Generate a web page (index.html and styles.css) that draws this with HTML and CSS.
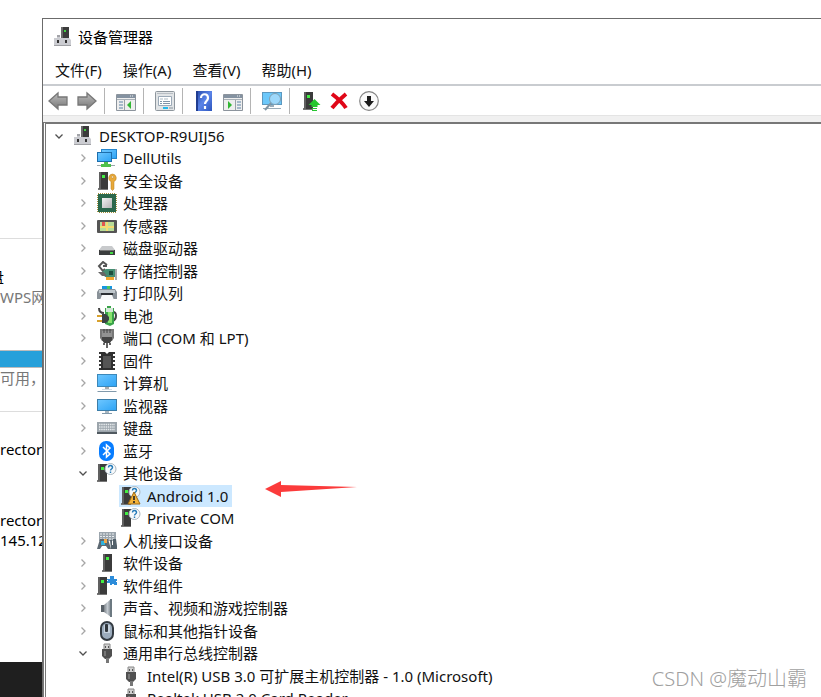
FILE: index.html
```
<!DOCTYPE html>
<html lang="zh-CN">
<head>
<meta charset="utf-8">
<meta name="viewport" content="width=device-width, initial-scale=1">
<title>设备管理器</title>
<link rel="stylesheet" href="styles.css">
</head>
<body>
<svg class="sprite" aria-hidden="true">
  <defs>
    <linearGradient id="g-screen" x1="0" y1="0" x2="1" y2="1"><stop offset="0" stop-color="#6cc6ff"/><stop offset="1" stop-color="#2fa4f5"/></linearGradient>
    <linearGradient id="g-arrow" x1="0" y1="0" x2="0" y2="1"><stop offset="0" stop-color="#bdbdbd"/><stop offset="1" stop-color="#777"/></linearGradient>
    <linearGradient id="g-metal" x1="0" y1="0" x2="1" y2="0"><stop offset="0" stop-color="#7c8288"/><stop offset=".5" stop-color="#c3cad0"/><stop offset="1" stop-color="#7d858c"/></linearGradient>
    <linearGradient id="g-help" x1="0" y1="0" x2="1" y2="1"><stop offset="0" stop-color="#2448a8"/><stop offset=".5" stop-color="#5b84e8"/><stop offset="1" stop-color="#2c55bd"/></linearGradient>
    <linearGradient id="g-chip" x1="0" y1="0" x2="1" y2="1"><stop offset="0" stop-color="#f3f3f3"/><stop offset="1" stop-color="#b4b4b4"/></linearGradient>
  </defs>
  <symbol id="down" viewBox="0 0 10 10"><path d="M1.500 3.500 5 7l3.500-3.500" fill="none" stroke="#505050" stroke-width="1.300"/></symbol>
  <symbol id="right" viewBox="0 0 10 10"><path d="M3.500 1.500 7 5 3.500 8.500" fill="none" stroke="#a6a6a6" stroke-width="1.300"/></symbol>

  <symbol id="tower" viewBox="0 0 20 20"><path d="M5 17h10v2H5z" fill="#777"/><path d="M6 1h9v17H6z" fill="#3b3b3b"/><path d="M6 1h2v17H6z" fill="#606060"/><path d="M9 4h3v3H9z" fill="#42ee43"/></symbol>
  <symbol id="towerleft" viewBox="0 0 20 20"><path d="M0 17h10v2H0z" fill="#777"/><path d="M1 1h9v17H1z" fill="#3b3b3b"/><path d="M1 1h2v17H1z" fill="#606060"/><path d="M4 4h3v3H4z" fill="#42ee43"/></symbol>
  <symbol id="root" viewBox="0 0 20 20"><path d="M8 0h8v11H8z" fill="#3b3b3b"/><path d="M8 0h2v11H8z" fill="#6a6a6a"/><path d="M11 3h2v2h-2z" fill="#42d243"/><path d="M4 8h3v3h9l2 2v6H1v-8h3z" fill="#cbccd1"/><path d="M4 8h3v2H4z" fill="#a2a3a8"/><path d="M1 18h17v1H1z" fill="#a0a1a5"/><path d="M4 13h2v3H4zM12 13h2v3h-2z" fill="#333"/></symbol>
  <symbol id="network" viewBox="0 0 20 20"><path d="M4 1h16v10H4z" fill="#2385cd"/><path d="M5 2h14v8H5z" fill="url(#g-screen)"/><path d="M0 4h15v10H0z" fill="#1d6eac"/><path d="M1 5h13v8H1z" fill="url(#g-screen)"/><path d="M7 14h4v2h3v3H4v-3h3z" fill="#4fc04c"/><path d="M0 17h4v1H0zM14 17h4v1h-4z" fill="#9ba7ad"/></symbol>
  <symbol id="security" viewBox="0 0 20 20"><use href="#towerleft" x="1" width="20" height="20"/><path fill-rule="evenodd" d="M15.500 3a4 4 0 0 1 1.500 7.600V18l-1.500 1.500L14 18v-7.400A4 4 0 0 1 15.500 3zm0 2a1 1 0 1 0 0 2 1 1 0 0 0 0-2z" fill="#e8a93a" stroke="#b67c1d" stroke-width=".5"/></symbol>
  <symbol id="cpu" viewBox="0 0 20 20"><path d="M1 1h18v18H1z" fill="none" stroke="#a58f3b" stroke-width="2" stroke-dasharray="1 1"/><path d="M1 1h18v18H1z" fill="#2b684c"/><path d="M5 5h10v10H5z" fill="url(#g-chip)"/></symbol>
  <symbol id="sensor" viewBox="0 0 20 20"><rect x="0" y="4" width="20" height="13" rx="1" fill="#555"/><path d="M3 6h14v9H3z" fill="#b8dc98"/><path d="M3 11h14M10 6v9" stroke="#f4dc71" stroke-width="2"/><path d="M5 6h3v4H5z" fill="#e3564e"/></symbol>
  <symbol id="disk" viewBox="0 0 20 20"><path d="M5 8h10l3 4H2z" fill="#c8cacc"/><path d="M2 12h16v5H2z" fill="#3b3d3e"/><path d="M3 12h14v1H3z" fill="#777"/><path d="M13 14h3v2h-3z" fill="#43d945"/></symbol>
  <symbol id="storage" viewBox="0 0 20 20"><path d="M10 4 6 1 2 5l4 5 2-2M6 5h4" fill="none" stroke="#555" stroke-width="2"/><path d="M5 11l4-3h10v8H8z" fill="#458e72"/><path d="M1 11h6l3 4H5z" fill="#666"/><path d="M12 10h4v4h-4z" fill="#1d4e3c"/><path d="M9 16h8v3H9z" fill="#f1a52d"/><path d="M19 8v11" stroke="#aaa" stroke-width="2"/></symbol>
  <symbol id="printer" viewBox="0 0 20 20"><path d="M5 3h10v4H5z" fill="#1696df"/><path d="M10 3h3v4h-3z" fill="#49c75e"/><path d="M2 6h16l2 3v7H0V9z" fill="#8a9299"/><path d="M2 7h16v3H2z" fill="#c0c8cd"/><path d="M4 10h12v2H4z" fill="#2b3034"/><path d="m5 12-2 5h14l-2-5z" fill="#f8fafb"/></symbol>
  <symbol id="battery" viewBox="0 0 20 20"><path d="M2 2c0 4 2 5 5 5" fill="none" stroke="#444" stroke-width="2"/><path d="M16 6c4 0 4 7 0 9" fill="none" stroke="#444" stroke-width="2"/><path d="M10 0h4v2h3v16l-4 2-5-2V2h2z" fill="#3aa34a"/><path d="M9 2h7v4H9z" fill="#d5e6d8"/><path d="M11 6h4v11h-4z" fill="#87e16c"/><path d="M0 10h6M0 15h6" stroke="#d8a12d" stroke-width="2"/><path d="M5 8h4l3 3v3l-3 3H5z" fill="#3d4144"/></symbol>
  <symbol id="port" viewBox="0 0 20 20"><path d="M3 1h14v9l-2 3H5l-2-3z" fill="#777"/><path d="M5 3h10v7H5z" fill="#929292"/><path d="M7 1v4M10 1v4M13 1v4" stroke="#444" stroke-width="1"/><path d="M5 9h10v3l-2 3H7l-2-3z" fill="#444"/><path d="M7 15v2M10 15v5M13 15v2" stroke="#666" stroke-width="2"/></symbol>
  <symbol id="firmware" viewBox="0 0 20 20"><path d="M2 2h3M2 6h3M2 10h3M2 14h3M2 18h3M15 2h3M15 6h3M15 10h3M15 14h3M15 18h3" stroke="#333" stroke-width="2"/><path d="M4 1h4l2 2 2-2h4v18H4z" fill="#303030"/><path d="M6 5h8v12H6z" fill="#555"/></symbol>
  <symbol id="computer" viewBox="0 0 20 20"><path d="M0 1h20v13H0z" fill="#3c88b9"/><path d="M1 2h18v11H1z" fill="url(#g-screen)"/><path d="M8 14h4v2H8z" fill="#aaa"/><path d="M5 16h10v1H5z" fill="#d1dce3"/><path d="M1 18h18l1 1H0z" fill="#8199ab"/></symbol>
  <symbol id="monitor" viewBox="0 0 20 20"><path d="M0 3h20v12H0z" fill="#3c7da8"/><path d="M1 4h18v10H1z" fill="url(#g-screen)"/><path d="M8 15h4v2H8z" fill="#aab7c0"/><path d="M5 17h10v1H5z" fill="#8199ab"/></symbol>
  <symbol id="keyboard" viewBox="0 0 20 20"><path d="M0 4h20v12H0z" fill="#9ca5ac"/><path d="M2 6.500h16M2 9h16M2 11.500h16" stroke="#e5e9eb" stroke-width="1.400" stroke-dasharray="1.500 .7"/><path d="M0 14h20v2H0z" fill="#505960"/></symbol>
  <symbol id="bluetooth" viewBox="0 0 20 20"><rect x="2" y="0" width="15" height="20" rx="7" fill="#087dff"/><path d="m6 6 7 7-3.500 3V4L13 7l-7 7" fill="none" stroke="#fff" stroke-width="1.500"/></symbol>
  <symbol id="unknown" viewBox="0 0 20 20"><use href="#towerleft" width="20" height="20"/><circle cx="13.500" cy="6" r="5.500" fill="#f6f9fb" stroke="#adb8c0"/><path d="M11.500 4.500c0-3 4-2.500 4 0 0 1.500-2 1.500-2 3M13.500 8.500V10" fill="none" stroke="#267bb8" stroke-width="1.400"/></symbol>
  <symbol id="warning" viewBox="0 0 20 20"><use href="#unknown" width="20" height="20"/><path d="m13 6 6 12H7z" fill="#f5b43b" stroke="#9c6712"/><path d="M13 10v4M13 15v2" stroke="#222" stroke-width="1.600"/></symbol>
  <symbol id="hid" viewBox="0 0 20 20"><path d="M2 1h17v9H2z" fill="#9ba5ad"/><path d="M3 3h15M3 5.500h15M3 8h15" stroke="#e9edf0" stroke-width="1.200" stroke-dasharray="2 1"/><path d="M3 8h8l3 10h-3l-2-3H5l-2 3H0z" fill="#5c6872"/><path d="M4 10h4v4H4z" fill="#2eb2dc"/><path d="M7 8h3v4H7z" fill="#f0a84b"/><path d="M13 9h2v5h1V8h3l1 7v3h-6z" fill="#53616b"/></symbol>
  <symbol id="component" viewBox="0 0 20 20"><use href="#towerleft" width="20" height="20"/><path d="M10 3h3V0h4v3h3v2h-1v1h1v3h-3V8h-2v1h-2V7h-3V5h1V4h-1z" fill="#2c8cda"/></symbol>
  <symbol id="speaker" viewBox="0 0 20 20"><path d="M4 7h3v7H4z" fill="#596168"/><path d="m7 7 7-6v18l-7-5z" fill="url(#g-metal)"/><path d="M14 1v18" fill="none" stroke="#6c7981" stroke-width="2"/></symbol>
  <symbol id="mouse" viewBox="0 0 20 20"><rect x="4" y="1" width="12" height="18" rx="6" fill="#9cacbd" stroke="#343b42" stroke-width="2"/><path d="M7 4h6v8H7z" fill="#c5d1dd"/><rect x="8" y="3" width="3" height="8" rx="1" fill="#30363c"/></symbol>
  <symbol id="usb" viewBox="0 0 20 20"><path d="M7 1h6v6H7z" fill="#d0d0d0" stroke="#888"/><path d="M8 3h1v2H8zM11 3h1v2h-1z" fill="#555"/><path d="M5 6h10v7l-3 3H8l-3-3z" fill="#505050"/><path d="M7 8h2v5H7z" fill="#777"/><path d="M9 15h3v5H9z" fill="#777"/></symbol>

  <symbol id="back" viewBox="0 0 20 20"><path d="M1 10 10 2v4h9v8h-9v4z" fill="url(#g-arrow)" stroke="#777" stroke-width="1.300"/></symbol>
  <symbol id="forward" viewBox="0 0 20 20"><path d="m19 10-9-8v4H1v8h9v4z" fill="url(#g-arrow)" stroke="#777" stroke-width="1.300"/></symbol>
  <symbol id="tree-panel" viewBox="0 0 20 20"><path d="M.5 3.500h19v16H.5z" fill="#eee" stroke="#8c949d"/><path d="M1 4h18v3H1z" fill="#8492a1"/><path d="M14 5h4" stroke="#eee" stroke-dasharray="1 1"/><path d="M1 8.500h18" stroke="#a8b0b7"/><path d="M8.500 9v10" stroke="#9aa1a7"/><path d="M3 11h4M3 14h4M3 17h4" stroke="#5d82a6"/><path d="M15 10v8l-4-4z" fill="#31b633"/></symbol>
  <symbol id="properties" viewBox="0 0 20 20"><rect x=".5" y=".5" width="19" height="19" rx="1" fill="#e1e4e6" stroke="#8e969d"/><path d="M2 2.500h16" stroke="#b8bec4"/><path d="M3.500 5.500h13v9h-13z" fill="#fff" stroke="#9ba9b7"/><path d="M5 7h3v2H5zM9 7h4v2H9z" fill="#d5dce1"/><path d="M5 10.500h2M8 10.500h7M5 12.500h2M8 12.500h7" stroke="#8294a7"/><path d="M8 16h5v2H8z" fill="#23b9ec"/><path d="M14 16h4v2h-4z" fill="#b4bcc2"/></symbol>
  <symbol id="help" viewBox="0 0 20 20"><path d="M2 0h16v20H2z" fill="url(#g-help)"/><path d="M2 0h2v20H2z" fill="#203d91"/><path d="M7 7c0-5 7-5 7 0 0 3-3 3-3 6M11 15v3" fill="none" stroke="#fff" stroke-width="2.200"/></symbol>
  <symbol id="action-panel" viewBox="0 0 20 20"><path d="M.5 3.500h19v16H.5z" fill="#eee" stroke="#8c949d"/><path d="M1 4h18v3H1z" fill="#8492a1"/><path d="M14 5h4" stroke="#eee" stroke-dasharray="1 1"/><path d="M1 8.500h18" stroke="#a8b0b7"/><path d="M12.500 9v10" stroke="#9aa1a7"/><path d="M14 11h4M14 14h4M14 17h4" stroke="#5d82a6"/><path d="M5 10v8l4-4z" fill="#31b633"/></symbol>
  <symbol id="scan" viewBox="0 0 20 20"><path d="M0 1h20v13H0z" fill="#5c98bf"/><path d="M1 2h18v11H1z" fill="#6cc8fa"/><path d="M8 14h4v2H8zM1 17h18v1H1z" fill="#9aacb9"/><circle cx="13" cy="8" r="5.500" fill="#9dd8fb" stroke="#7f9fb2"/><path d="m9 12-6 7" stroke="#8096a5" stroke-width="2"/></symbol>
  <symbol id="update" viewBox="0 0 20 20"><use href="#towerleft" x="2" width="20" height="20"/><path d="m13.500 8 6 6h-3v2h-6v-2h-3z" fill="#25c630"/><path d="M11 17h5v1h-5zM11 19h5v1h-5z" fill="#25c630"/></symbol>
  <symbol id="remove" viewBox="0 0 20 20"><path d="M2 3c4 3 10 8 14 14M16 3C11 7 6 12 2 17" fill="none" stroke="#e00718" stroke-width="4"/></symbol>
  <symbol id="disable" viewBox="0 0 20 20"><circle cx="10" cy="10" r="9.300" fill="#fafafa" stroke="#858585" stroke-width="1.200"/><path d="M8 5h4v5h3l-5 6-5-6h3z" fill="#1c1c1c"/></symbol>
</svg>

<div class="desktop">
  <aside class="behind">
    <section class="drive"><p class="clipped">盘</p><p class="muted">WPS网盘</p></section>
    <section class="usage"><div class="usage-bar"></div><p class="muted">可用，</p></section>
    <section class="log"><p>rectory</p><p class="second">rectory</p><p>145.12</p></section>
    <div class="taskbar"></div>
  </aside>

  <main class="window">
    <header class="titlebar"><svg class="icon"><use href="#root"/></svg><h1>设备管理器</h1></header>
    <nav class="menubar"><button type="button">文件(F)</button><button type="button">操作(A)</button><button type="button">查看(V)</button><button type="button">帮助(H)</button></nav>
    <div class="toolbar" role="toolbar" aria-label="工具栏">
      <button type="button" aria-label="后退"><svg class="icon"><use href="#back"/></svg></button>
      <button type="button" aria-label="前进"><svg class="icon"><use href="#forward"/></svg></button>
      <span class="separator"></span>
      <button type="button" aria-label="显示控制台树"><svg class="icon"><use href="#tree-panel"/></svg></button>
      <span class="separator"></span>
      <button type="button" aria-label="属性"><svg class="icon"><use href="#properties"/></svg></button>
      <span class="separator"></span>
      <button type="button" aria-label="帮助"><svg class="icon"><use href="#help"/></svg></button>
      <button type="button" aria-label="显示操作窗格"><svg class="icon"><use href="#action-panel"/></svg></button>
      <span class="separator"></span>
      <button type="button" aria-label="扫描硬件改动"><svg class="icon"><use href="#scan"/></svg></button>
      <span class="separator"></span>
      <button type="button" aria-label="更新驱动程序"><svg class="icon"><use href="#update"/></svg></button>
      <button type="button" aria-label="卸载设备"><svg class="icon"><use href="#remove"/></svg></button>
      <button type="button" aria-label="禁用设备"><svg class="icon"><use href="#disable"/></svg></button>
    </div>
    <div class="pane">
      <ul class="tree" role="tree" aria-label="设备">
        <li class="row" role="treeitem" aria-level="1" aria-expanded="true"><button class="toggle" type="button" aria-label="折叠"><svg><use href="#down"/></svg></button><span class="item"><svg class="icon"><use href="#root"/></svg>DESKTOP-R9UIJ56</span></li>
        <li class="row level-2" role="treeitem" aria-level="2" aria-expanded="false"><button class="toggle" type="button" aria-label="展开"><svg><use href="#right"/></svg></button><span class="item"><svg class="icon"><use href="#network"/></svg>DellUtils</span></li>
        <li class="row level-2" role="treeitem" aria-level="2" aria-expanded="false"><button class="toggle" type="button" aria-label="展开"><svg><use href="#right"/></svg></button><span class="item"><svg class="icon"><use href="#security"/></svg>安全设备</span></li>
        <li class="row level-2" role="treeitem" aria-level="2" aria-expanded="false"><button class="toggle" type="button" aria-label="展开"><svg><use href="#right"/></svg></button><span class="item"><svg class="icon"><use href="#cpu"/></svg>处理器</span></li>
        <li class="row level-2" role="treeitem" aria-level="2" aria-expanded="false"><button class="toggle" type="button" aria-label="展开"><svg><use href="#right"/></svg></button><span class="item"><svg class="icon"><use href="#sensor"/></svg>传感器</span></li>
        <li class="row level-2" role="treeitem" aria-level="2" aria-expanded="false"><button class="toggle" type="button" aria-label="展开"><svg><use href="#right"/></svg></button><span class="item"><svg class="icon"><use href="#disk"/></svg>磁盘驱动器</span></li>
        <li class="row level-2" role="treeitem" aria-level="2" aria-expanded="false"><button class="toggle" type="button" aria-label="展开"><svg><use href="#right"/></svg></button><span class="item"><svg class="icon"><use href="#storage"/></svg>存储控制器</span></li>
        <li class="row level-2" role="treeitem" aria-level="2" aria-expanded="false"><button class="toggle" type="button" aria-label="展开"><svg><use href="#right"/></svg></button><span class="item"><svg class="icon"><use href="#printer"/></svg>打印队列</span></li>
        <li class="row level-2" role="treeitem" aria-level="2" aria-expanded="false"><button class="toggle" type="button" aria-label="展开"><svg><use href="#right"/></svg></button><span class="item"><svg class="icon"><use href="#battery"/></svg>电池</span></li>
        <li class="row level-2" role="treeitem" aria-level="2" aria-expanded="false"><button class="toggle" type="button" aria-label="展开"><svg><use href="#right"/></svg></button><span class="item"><svg class="icon"><use href="#port"/></svg>端口 (COM 和 LPT)</span></li>
        <li class="row level-2" role="treeitem" aria-level="2" aria-expanded="false"><button class="toggle" type="button" aria-label="展开"><svg><use href="#right"/></svg></button><span class="item"><svg class="icon"><use href="#firmware"/></svg>固件</span></li>
        <li class="row level-2" role="treeitem" aria-level="2" aria-expanded="false"><button class="toggle" type="button" aria-label="展开"><svg><use href="#right"/></svg></button><span class="item"><svg class="icon"><use href="#computer"/></svg>计算机</span></li>
        <li class="row level-2" role="treeitem" aria-level="2" aria-expanded="false"><button class="toggle" type="button" aria-label="展开"><svg><use href="#right"/></svg></button><span class="item"><svg class="icon"><use href="#monitor"/></svg>监视器</span></li>
        <li class="row level-2" role="treeitem" aria-level="2" aria-expanded="false"><button class="toggle" type="button" aria-label="展开"><svg><use href="#right"/></svg></button><span class="item"><svg class="icon"><use href="#keyboard"/></svg>键盘</span></li>
        <li class="row level-2" role="treeitem" aria-level="2" aria-expanded="false"><button class="toggle" type="button" aria-label="展开"><svg><use href="#right"/></svg></button><span class="item"><svg class="icon"><use href="#bluetooth"/></svg>蓝牙</span></li>
        <li class="row level-2" role="treeitem" aria-level="2" aria-expanded="true"><button class="toggle" type="button" aria-label="折叠"><svg><use href="#down"/></svg></button><span class="item"><svg class="icon"><use href="#unknown"/></svg>其他设备</span></li>
        <li class="row level-3" role="treeitem" aria-level="3" aria-selected="true"><span class="item selected"><svg class="icon"><use href="#warning"/></svg>Android 1.0</span><svg class="pointer" viewBox="0 0 92 16" aria-hidden="true"><path d="M0 8 16 0v4l76 2-76 5v5z" fill="#fb3b3b"/></svg></li>
        <li class="row level-3" role="treeitem" aria-level="3"><span class="item"><svg class="icon"><use href="#unknown"/></svg>Private COM</span></li>
        <li class="row level-2" role="treeitem" aria-level="2" aria-expanded="false"><button class="toggle" type="button" aria-label="展开"><svg><use href="#right"/></svg></button><span class="item"><svg class="icon"><use href="#hid"/></svg>人机接口设备</span></li>
        <li class="row level-2" role="treeitem" aria-level="2" aria-expanded="false"><button class="toggle" type="button" aria-label="展开"><svg><use href="#right"/></svg></button><span class="item"><svg class="icon"><use href="#tower"/></svg>软件设备</span></li>
        <li class="row level-2" role="treeitem" aria-level="2" aria-expanded="false"><button class="toggle" type="button" aria-label="展开"><svg><use href="#right"/></svg></button><span class="item"><svg class="icon"><use href="#component"/></svg>软件组件</span></li>
        <li class="row level-2" role="treeitem" aria-level="2" aria-expanded="false"><button class="toggle" type="button" aria-label="展开"><svg><use href="#right"/></svg></button><span class="item"><svg class="icon"><use href="#speaker"/></svg>声音、视频和游戏控制器</span></li>
        <li class="row level-2" role="treeitem" aria-level="2" aria-expanded="false"><button class="toggle" type="button" aria-label="展开"><svg><use href="#right"/></svg></button><span class="item"><svg class="icon"><use href="#mouse"/></svg>鼠标和其他指针设备</span></li>
        <li class="row level-2" role="treeitem" aria-level="2" aria-expanded="true"><button class="toggle" type="button" aria-label="折叠"><svg><use href="#down"/></svg></button><span class="item"><svg class="icon"><use href="#usb"/></svg>通用串行总线控制器</span></li>
        <li class="row level-3" role="treeitem" aria-level="3"><span class="item"><svg class="icon"><use href="#usb"/></svg>Intel(R) USB 3.0 可扩展主机控制器 - 1.0 (Microsoft)</span></li>
        <li class="row level-3" role="treeitem" aria-level="3"><span class="item"><svg class="icon"><use href="#usb"/></svg>Realtek USB 2.0 Card Reader</span></li>
      </ul>
    </div>
  </main>
  <p class="watermark">CSDN @魔动山霸</p>
</div>
</body>
</html>
```
FILE: styles.css
```
* { box-sizing: border-box; }

body {
  margin: 0;
  overflow: hidden;
  background: #fff;
  color: #111;
  font: 15px/22px "Noto Sans", "Noto Sans CJK SC", sans-serif;
}

h1, p, ul { margin: 0; padding: 0; }

button {
  padding: 0;
  border: 0;
  background: none;
  color: inherit;
  font: inherit;
}

.sprite { position: absolute; width: 0; height: 0; }

.icon { display: block; flex: none; width: 20px; height: 20px; }

.desktop {
  position: relative;
  display: grid;
  grid-template-columns: 42px minmax(0, 1fr);
  height: 100vh;
  overflow: hidden;
}

/* Page that shows to the left of the window */
.behind {
  display: flex;
  flex-direction: column;
  min-width: 0;
  overflow: hidden;
  padding-top: 238px;
  color: #000;
  line-height: 20px;
  white-space: nowrap;
}

.drive { height: 112px; padding-top: 28px; border-top: 1px solid #ddd; }
.clipped { margin-left: -11px; }
.muted { color: #777; }
.usage { height: 62px; border-bottom: 1px solid #ddd; }
.usage-bar { height: 18px; border: solid #bcbcbc; border-width: 1px 0; background: #26a0da; }
.log { flex: 1; padding-top: 27px; }
.second { margin-top: 51px; }
.taskbar { height: 35px; background: #1f1f1f; }

/* Window */
.window {
  display: flex;
  flex-direction: column;
  min-width: 0;
  min-height: 0;
  margin-top: 18px;
  border: solid #6b6b6b;
  border-width: 1px 0 0 1px;
  background: #fff;
}

.titlebar { display: flex; align-items: center; gap: 5px; height: 36px; padding-left: 10px; }
.titlebar h1 { color: #000; font-size: 15px; font-weight: 400; }

.menubar { display: flex; gap: 21px; height: 29px; padding: 4px 12px 0; }
.menubar button { height: 22px; }

.toolbar {
  display: flex;
  align-items: center;
  gap: 9px;
  height: 32px;
  padding: 0 5px;
  border-top: 2px solid #c9ccd0;
  border-bottom: 1px solid #e4e4e4;
}
.separator { width: 1px; height: 26px; margin: 0 2px 0 -2px; background: #b4b4b4; }

.pane {
  flex: 1;
  min-height: 0;
  overflow: hidden;
  border-top: 6px solid #f0f0f0;
}

.tree {
  display: grid;
  grid-auto-rows: 23px 22px;
  min-height: 100%;
  border-top: 2px solid #777;
  border-left: 3px double #777;
  padding-left: 1px;
  list-style: none;
}

.row { position: relative; display: flex; align-items: center; white-space: nowrap; }
.level-2 { padding-left: 24px; }
.level-3 { padding-left: 72px; }
.toggle { display: grid; flex: none; width: 24px; place-items: center; }
.toggle svg { width: 10px; height: 10px; }
.item { display: flex; align-items: center; gap: 6px; height: 22px; padding: 0 4px 0 2px; }
.selected { background: #cce8ff; }

/* Red arrow that lies over the selected row */
.pointer { position: absolute; left: 218px; top: -3px; width: 92px; height: 16px; }

.watermark {
  position: absolute;
  right: 14px;
  bottom: 4px;
  color: #a0a0a0;
  font-size: 20px;
  font-weight: 300;
  line-height: 28px;
}
```
